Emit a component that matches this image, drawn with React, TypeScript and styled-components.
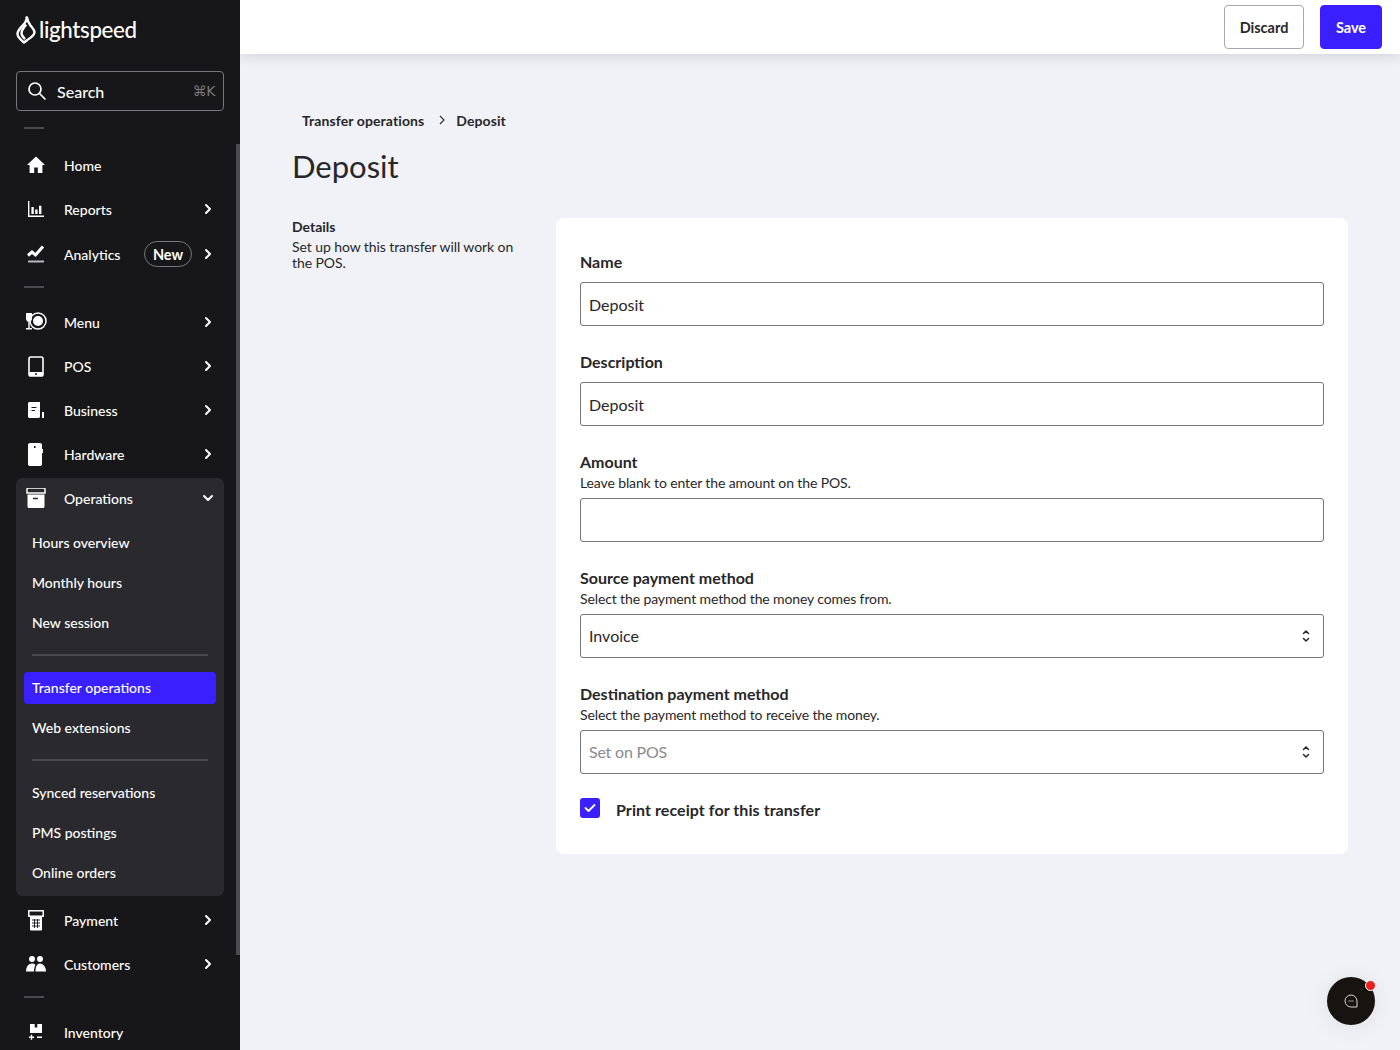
import React from "react";
import styled, { createGlobalStyle } from "styled-components";

const GlobalStyle = createGlobalStyle`
    html, body {
        margin: 0;
        padding: 0;
        background-color: #f0f2f7;
        font-family: Lato, "Noto Sans", sans-serif;
    }
    * {
        box-sizing: border-box;
    }
`;

const Chevron = ({ down }: { down?: boolean }) => (
    <svg width="12" height="12" viewBox="0 0 12 12" fill="none" stroke="#fff" strokeWidth="2" strokeLinecap="round" strokeLinejoin="round">
        {down ? <path d="M2 4l4 4 4-4" /> : <path d="M4 2l4 4-4 4" />}
    </svg>
);

const HomeIcon = () => (
    <svg width="20" height="20" viewBox="0 0 20 20" fill="#fff">
        <path d="M10 1.500L1 10h2.600v8h4.600v-5.400h3.600V18h4.600v-8H19z" />
    </svg>
);
const ReportsIcon = () => (
    <svg width="20" height="20" viewBox="0 0 20 20" fill="#fff">
        <path d="M2 2h1.400v14.400H18V18H2z" />
        <path d="M5.400 8h2.400v7H5.400zM9.200 10.400h2.400V15H9.200zM13 6.800h2.400V15H13z" />
    </svg>
);
const AnalyticsIcon = () => (
    <svg width="20" height="20" viewBox="0 0 20 20" fill="none" stroke="#fff">
        <path d="M2 11.500l4-3.500 3.500 3L17 2.500" strokeWidth="3" />
        <path d="M2 17.500h16" strokeWidth="2" stroke="#b8b8bc" />
    </svg>
);
const MenuIcon = () => (
    <svg width="22" height="22" viewBox="0 0 22 22" fill="none">
        <path d="M1 2h6v5.500c0 1.800-1.100 3-2.300 3.300V17H7v1.500H1V17h2.300v-6.200C2.100 10.500 1 9.300 1 7.500z" fill="#fff" />
        <circle cx="13" cy="10" r="8" stroke="#fff" strokeWidth="1.500" />
        <circle cx="13" cy="10" r="5" fill="#fff" />
    </svg>
);
const PosIcon = () => (
    <svg width="16" height="21" viewBox="0 0 16 21" fill="none">
        <rect x="1" y="1" width="14" height="19" rx="1.800" stroke="#fff" strokeWidth="1.600" />
        <path d="M1 16h14v2.500a1.500 1.500 0 0 1-1.500 1.500h-11A1.500 1.500 0 0 1 1 18.500z" fill="#fff" />
        <circle cx="8" cy="18" r="1" fill="#17171a" />
    </svg>
);
const BusinessIcon = () => (
    <svg width="18" height="17" viewBox="0 0 18 17" fill="none">
        <path d="M1 1.500C1 .7 1.700 0 2.500 0H13v14.500c0 .8-.7 1.500-1.500 1.500h-9C1.700 16 1 15.300 1 14.500z" fill="#fff" />
        <path d="M4.500 5.500h5M4.500 8.500h3.500" stroke="#17171a" strokeWidth="1.200" />
        <path d="M15 10h2v6h-2z" fill="#fff" />
    </svg>
);
const HardwareIcon = () => (
    <svg width="16" height="23" viewBox="0 0 16 23" fill="none">
        <path d="M2 0h10c1 0 2 .8 2 1.800V6h1v4h-1v11.200c0 1-1 1.800-2 1.800H2c-1 0-2-.8-2-1.800V1.800C0 .8 1 0 2 0z" fill="#fff" />
        <rect x="6" y="3" width="1.500" height="2" fill="#17171a" />
    </svg>
);
const OperationsIcon = () => (
    <svg width="20" height="20" viewBox="0 0 20 20" fill="none">
        <path d="M1 1.500C1 .7 1.500 0 2.300 0h15.400C18.500 0 19 .7 19 1.500V5H1z" stroke="#fff" strokeWidth="1.500" />
        <path d="M1.500 6.500h17v12c0 .8-.7 1.500-1.500 1.500H3c-.8 0-1.500-.7-1.500-1.500z" fill="#fff" />
        <path d="M7 10.500h5" stroke="#2a2a2e" strokeWidth="1.500" />
    </svg>
);
const PaymentIcon = () => (
    <svg width="16" height="21" viewBox="0 0 16 21" fill="none">
        <rect x=".8" y=".8" width="14.400" height="5.400" stroke="#fff" strokeWidth="1.500" />
        <path d="M2 7h12v12.500c0 .6-.4 1-1 1H3c-.6 0-1-.4-1-1z" fill="#fff" />
        <path d="M4 10h8M4 13h8M4 16h8M6.500 9v9M9.500 9v9" stroke="#17171a" strokeWidth=".9" />
    </svg>
);
const CustomersIcon = () => (
    <svg width="20" height="16" viewBox="0 0 20 16" fill="#fff">
        <circle cx="6" cy="3" r="3" />
        <circle cx="14" cy="3" r="3" />
        <path d="M0 15.500c0-4 2-8 6-8 1.500 0 2.600.5 3.400 1.400-.9 1.800-1.400 4-1.400 6.600z" />
        <path d="M9.500 15.500c0-4 1-8 4.500-8s6 4 6 8z" />
    </svg>
);
const InventoryIcon = () => (
    <svg width="16" height="16" viewBox="0 0 16 16" fill="#fff">
        <path d="M2 0h4.700v3.500h2.600V0H14v9H2z" />
        <path d="M1 12.500h5v1.400H1zM2.800 10.700h1.400v5H2.800zM9 12.500h5v1.400H9z" />
    </svg>
);

const Page = styled.div`
    display: flex;
    width: 1400px;
    height: 1050px;
    overflow: hidden;
`;
const Sidebar = styled.aside`
    position: relative;
    flex: 0 0 240px;
    height: 1050px;
    overflow: hidden;
    background-color: #17171a;
    color: #fff;
`;
const ScrollThumb = styled.div`
    position: absolute;
    top: 144px;
    right: 0;
    width: 4px;
    height: 811px;
    background-color: #4b4b4f;
`;
const LogoRow = styled.div`
    display: flex;
    align-items: center;
    gap: 3px;
    height: 71px;
    padding: 0 0 11px 16px;
`;
const LogoText = styled.span`
    font-size: 22.300px;
    line-height: 28px;
    font-weight: 500;
    letter-spacing: -0.35px;
`;
const SearchBox = styled.div`
    display: flex;
    align-items: center;
    width: 208px;
    height: 40px;
    margin: 0 16px;
    padding: 0 8px 0 10px;
    border: 1px solid #77777b;
    border-radius: 4px;
`;
const SearchLabel = styled.span`
    flex: 1;
    margin-left: 10px;
    font-size: 16px;
    font-weight: 500;
`;
const Shortcut = styled.span`
    color: #77777b;
    font-size: 14px;
    font-family: "DejaVu Sans", Lato, sans-serif;
    letter-spacing: -0.5px;
`;
const ShortDivider = styled.div<{ $top: number; $bottom: number }>`
    width: 20px;
    height: 2px;
    margin: ${p => p.$top}px 0 ${p => p.$bottom}px 24px;
    background-color: #4b4b4f;
`;
const NavRow = styled.div<{ $offset?: number }>`
    display: flex;
    align-items: center;
    width: 208px;
    height: 44px;
    margin: ${p => p.$offset ?? 0}px 0 0 16px;
    padding: 0 10px 0 8px;
    font-size: 14px;
    font-weight: 500;
`;
const NavIcon = styled.span`
    display: flex;
    align-items: center;
    justify-content: center;
    flex: 0 0 24px;
    height: 24px;
    margin-right: 16px;
`;
const NavLabel = styled.span`
    flex: 1;
`;
const NewBadge = styled.span`
    display: flex;
    align-items: center;
    justify-content: center;
    width: 48px;
    height: 26px;
    margin-right: 10px;
    border: 1px solid #77777b;
    border-radius: 13px;
    font-size: 14.500px;
    font-weight: 700;
`;
const Group = styled.div`
    width: 208px;
    height: 418px;
    margin: 2px 0 2px 16px;
    border-radius: 6px;
    background-color: #2a2a2e;
`;
const GroupHead = styled.div`
    display: flex;
    align-items: center;
    height: 41px;
    padding: 0 10px 1px 8px;
    font-size: 14px;
    font-weight: 500;
`;
const SubRow = styled.div<{ $active?: boolean }>`
    display: flex;
    align-items: center;
    height: 32px;
    margin: 8px;
    padding: 0 8px 2px;
    border-radius: 4px;
    font-size: 14px;
    font-weight: 500;
    background-color: ${p => (p.$active ? "#3a1fff" : "transparent")};
`;
const SubDivider = styled.div`
    height: 2px;
    margin: 15px 16px 16px;
    background-color: #4b4b4f;
`;

const Main = styled.main`
    position: relative;
    flex: 1;
    height: 1050px;
    overflow: hidden;
`;
const TopBar = styled.header`
    display: flex;
    justify-content: flex-end;
    gap: 16px;
    height: 54px;
    padding: 5px 18px 0 0;
    background-color: #fff;
    box-shadow: 0 2px 14px rgba(23, 23, 26, 0.15);
`;
const Button = styled.button<{ $primary?: boolean }>`
    height: 44px;
    width: ${p => (p.$primary ? 62 : 80)}px;
    padding: 0;
    border: 1px solid ${p => (p.$primary ? "#3a1fff" : "#a8a8ac")};
    border-radius: 4px;
    background-color: ${p => (p.$primary ? "#3a1fff" : "#fff")};
    color: ${p => (p.$primary ? "#fff" : "#27272a")};
    font-family: Lato, sans-serif;
    font-size: 14.500px;
    font-weight: 700;
`;
const Content = styled.div`
    padding: 56px 52px 0;
`;
const Breadcrumbs = styled.nav`
    display: flex;
    align-items: center;
    height: 20px;
    padding-left: 10px;
    color: #27272a;
    font-size: 14px;
    font-weight: 700;
    letter-spacing: 0.1px;
`;
const CrumbSep = styled.span`
    display: flex;
    margin: 0 10px 0 14px;
`;
const Title = styled.h1`
    margin: 13px 0 0;
    color: #27272a;
    font-size: 31px;
    line-height: 46px;
    font-weight: 400;
`;
const Columns = styled.div`
    display: flex;
    gap: 28px;
    margin-top: 29px;
`;
const Aside = styled.div`
    flex: 0 0 236px;
    padding-top: 1px;
    color: #27272a;
`;
const AsideTitle = styled.div`
    font-size: 14px;
    line-height: 16px;
    font-weight: 700;
`;
const AsideText = styled.p`
    margin: 4px 0 0;
    padding-right: 10px;
    font-size: 14px;
    line-height: 16px;
    letter-spacing: -0.08px;
`;
const Card = styled.section`
    width: 792px;
    height: 636px;
    padding: 34px 24px 0;
    border-radius: 8px;
    background-color: #fff;
`;
const Field = styled.div`
    margin-bottom: 26px;
`;
const Label = styled.div`
    color: #27272a;
    font-size: 16px;
    line-height: 20px;
    font-weight: 700;
`;
const Hint = styled.div`
    margin-top: 2px;
    color: #27272a;
    font-size: 14px;
    line-height: 18px;
    letter-spacing: -0.12px;
`;
const InputBox = styled.div`
    display: flex;
    align-items: center;
    justify-content: space-between;
    width: 744px;
    height: 44px;
    margin-top: 10px;
    padding: 1px 12px 0 8px;
    border: 1px solid #77777b;
    border-radius: 3px;
    color: #27272a;
    font-size: 16px;
`;
const SelectBox = styled(InputBox)<{ $muted?: boolean }>`
    margin-top: 6px;
    padding: 0 12px 1px 8px;
    color: ${p => (p.$muted ? "#8a8a8e" : "#27272a")};
    letter-spacing: ${p => (p.$muted ? "-0.2px" : "0")};
`;
const CheckRow = styled.div`
    display: flex;
    align-items: center;
    gap: 16px;
    height: 20px;
    padding-bottom: 2px;
    color: #27272a;
    font-size: 16px;
    font-weight: 700;
    letter-spacing: 0.07px;
`;
const CheckBox = styled.span`
    display: flex;
    align-items: center;
    justify-content: center;
    width: 20px;
    height: 20px;
    margin-top: -2px;
    border-radius: 3px;
    background-color: #3a1fff;
`;
const ChatBubble = styled.div`
    position: absolute;
    right: 25px;
    bottom: 25px;
    display: flex;
    align-items: center;
    justify-content: center;
    width: 48px;
    height: 48px;
    border-radius: 50%;
    background-color: #17130f;
    box-shadow: 0 2px 24px rgba(23, 23, 26, 0.08);
`;
const ChatDot = styled.span`
    position: absolute;
    top: 3px;
    right: -1px;
    width: 11px;
    height: 11px;
    border: 1.500px solid #fff;
    border-radius: 50%;
    background-color: #e8211f;
`;

const Stepper = () => (
    <svg width="10" height="14" viewBox="0 0 10 14" fill="none" stroke="#27272a" strokeWidth="1.500" strokeLinecap="round" strokeLinejoin="round">
        <path d="M2.500 4.500L5 2l2.500 2.500M2.500 9.500L5 12l2.500-2.500" />
    </svg>
);

type Item = { label: string; icon: React.ReactNode; chevron?: boolean; badge?: boolean; offset?: number };

const topItems: Item[] = [
    { label: "Home", icon: <HomeIcon /> },
    { label: "Reports", icon: <ReportsIcon />, chevron: true },
    { label: "Analytics", icon: <AnalyticsIcon />, chevron: true, badge: true, offset: 1 },
];
const midItems: Item[] = [
    { label: "Menu", icon: <MenuIcon />, chevron: true },
    { label: "POS", icon: <PosIcon />, chevron: true },
    { label: "Business", icon: <BusinessIcon />, chevron: true },
    { label: "Hardware", icon: <HardwareIcon />, chevron: true },
];
const lowItems: Item[] = [
    { label: "Payment", icon: <PaymentIcon />, chevron: true },
    { label: "Customers", icon: <CustomersIcon />, chevron: true },
];

const Nav = ({ item }: { item: Item }) => (
    <NavRow $offset={item.offset}>
        <NavIcon>{item.icon}</NavIcon>
        <NavLabel>{item.label}</NavLabel>
        {item.badge && <NewBadge>New</NewBadge>}
        {item.chevron && <Chevron />}
    </NavRow>
);

const App = () => {
    return (
        <>
            <GlobalStyle />
            <Page>
                <Sidebar>
                    <ScrollThumb />
                    <LogoRow>
                        <svg width="20" height="28" viewBox="0 0 20 28" fill="none" stroke="#fff" strokeWidth="2.400" strokeLinejoin="round">
                            <path d="M10.500 1.500c.6 3.500-1.500 5.500-4.500 8.800C3.500 13 1.500 15 1.500 18c0 3.300 3.500 6 6.500 8.500l3-2.300c3-2.200 7.500-4.700 7.500-8 0-2.500-2-4.200-4-6.700-1.800-2.400-3-4.500-3.500-8z" />
                            <path d="M10 8.500c-1.800 2.800-4.500 5.300-4.500 8.800 0 2.500 1.600 4 3.500 5.800" />
                        </svg>
                        <LogoText>lightspeed</LogoText>
                    </LogoRow>
                    <SearchBox>
                        <svg width="20" height="20" viewBox="0 0 20 20" fill="none" stroke="#fff" strokeWidth="1.700" strokeLinecap="round">
                            <circle cx="8" cy="8" r="6" />
                            <path d="M12.500 12.500L18 18" />
                        </svg>
                        <SearchLabel>Search</SearchLabel>
                        <Shortcut>⌘K</Shortcut>
                    </SearchBox>
                    <ShortDivider $top={16} $bottom={14} />
                    {topItems.map(item => <Nav key={item.label} item={item} />)}
                    <ShortDivider $top={10} $bottom={12} />
                    {midItems.map(item => <Nav key={item.label} item={item} />)}
                    <Group>
                        <GroupHead>
                            <NavIcon><OperationsIcon /></NavIcon>
                            <NavLabel>Operations</NavLabel>
                            <Chevron down />
                        </GroupHead>
                        <SubRow>Hours overview</SubRow>
                        <SubRow>Monthly hours</SubRow>
                        <SubRow>New session</SubRow>
                        <SubDivider />
                        <SubRow $active>Transfer operations</SubRow>
                        <SubRow>Web extensions</SubRow>
                        <SubDivider />
                        <SubRow>Synced reservations</SubRow>
                        <SubRow>PMS postings</SubRow>
                        <SubRow>Online orders</SubRow>
                    </Group>
                    {lowItems.map(item => <Nav key={item.label} item={item} />)}
                    <ShortDivider $top={10} $bottom={12} />
                    <Nav item={{ label: "Inventory", icon: <InventoryIcon /> }} />
                </Sidebar>
                <Main>
                    <TopBar>
                        <Button>Discard</Button>
                        <Button $primary>Save</Button>
                    </TopBar>
                    <Content>
                        <Breadcrumbs>
                            <span>Transfer operations</span>
                            <CrumbSep>
                                <svg width="8" height="10" viewBox="0 0 8 10" fill="none" stroke="#27272a" strokeWidth="1.100">
                                    <path d="M2 1l4 4-4 4" />
                                </svg>
                            </CrumbSep>
                            <span>Deposit</span>
                        </Breadcrumbs>
                        <Title>Deposit</Title>
                        <Columns>
                            <Aside>
                                <AsideTitle>Details</AsideTitle>
                                <AsideText>Set up how this transfer will work on the POS.</AsideText>
                            </Aside>
                            <Card>
                                <Field>
                                    <Label>Name</Label>
                                    <InputBox>Deposit</InputBox>
                                </Field>
                                <Field>
                                    <Label>Description</Label>
                                    <InputBox>Deposit</InputBox>
                                </Field>
                                <Field>
                                    <Label>Amount</Label>
                                    <Hint>Leave blank to enter the amount on the POS.</Hint>
                                    <SelectBox />
                                </Field>
                                <Field>
                                    <Label>Source payment method</Label>
                                    <Hint>Select the payment method the money comes from.</Hint>
                                    <SelectBox>Invoice<Stepper /></SelectBox>
                                </Field>
                                <Field>
                                    <Label>Destination payment method</Label>
                                    <Hint>Select the payment method to receive the money.</Hint>
                                    <SelectBox $muted>Set on POS<Stepper /></SelectBox>
                                </Field>
                                <CheckRow>
                                    <CheckBox>
                                        <svg width="12" height="10" viewBox="0 0 12 10" fill="none" stroke="#fff" strokeWidth="1.800" strokeLinecap="round" strokeLinejoin="round">
                                            <path d="M1.500 5l3 3 6-6" />
                                        </svg>
                                    </CheckBox>
                                    Print receipt for this transfer
                                </CheckRow>
                            </Card>
                        </Columns>
                    </Content>
                    <ChatBubble>
                        <svg width="14" height="14" viewBox="0 0 14 14" fill="none">
                            <path d="M7 1a6 6 0 1 0 0 12h6V7a6 6 0 0 0-6-6z" stroke="#d8d8d8" strokeWidth="1" />
                            <path d="M4.500 7h5" stroke="#d8d8d8" strokeWidth="1.200" strokeDasharray="1.200 .7" />
                        </svg>
                        <ChatDot />
                    </ChatBubble>
                </Main>
            </Page>
        </>
    );
};

export default App;
